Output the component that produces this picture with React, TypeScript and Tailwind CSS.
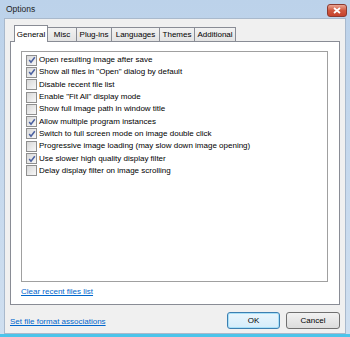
const options: { label: string; checked: boolean }[] = [
  { label: 'Open resulting image after save', checked: true },
  { label: 'Show all files in "Open" dialog by default', checked: true },
  { label: 'Disable recent file list', checked: false },
  { label: 'Enable "Fit All" display mode', checked: false },
  { label: 'Show full image path in window title', checked: false },
  { label: 'Allow multiple program instances', checked: true },
  { label: 'Switch to full screen mode on image double click', checked: true },
  { label: 'Progressive image loading (may slow down image opening)', checked: false },
  { label: 'Use slower high quality display filter', checked: true },
  { label: 'Delay display filter on image scrolling', checked: false },
];

const tabs = [
  { label: 'General', w: 'w-[34px]' },
  { label: 'Misc', w: 'w-[30px]' },
  { label: 'Plug-ins', w: 'w-[36px]' },
  { label: 'Languages', w: 'w-[49px]' },
  { label: 'Themes', w: 'w-[36px]' },
  { label: 'Additional', w: 'w-[42px]' },
];

function CheckBox({ checked }: { checked: boolean }) {
  return (
    <div className="flex h-[11px] w-[11px] shrink-0 items-center justify-center border border-[#8f8f8f] bg-white">
      <div className="flex h-[9px] w-[9px] items-center justify-center bg-gradient-to-br from-[#d8d8d8] to-[#f8f8f8]">
        {checked && (
          <svg width="8" height="8" viewBox="0 0 8 8">
            <path d="M1.2 4 L3 6.3 L6.8 1.2" fill="none" stroke="#4b61a0" strokeWidth="1.5" />
          </svg>
        )}
      </div>
    </div>
  );
}

export default function App() {
  return (
    <div
      className="flex h-[337px] w-[350px] flex-col overflow-hidden bg-gradient-to-b from-[#bcd2ea] to-[#cfdff0] text-[8px] text-black"
      style={{ fontFamily: '"Liberation Sans", Arial, sans-serif' }}
    >
      <div className="flex h-[18px] shrink-0 items-center justify-between pl-[6px] pr-[3px]">
        <span className="text-[8.5px] text-[#1e1e1e]">Options</span>
        <div className="mt-[2px] flex h-[13px] w-[20px] items-center justify-center rounded-[3px] border border-[#8b3a30] bg-gradient-to-b from-[#e8a493] via-[#d0583f] to-[#c6422c]">
          <svg width="8" height="7" viewBox="0 0 8 7">
            <path d="M1 1 L7 6 M7 1 L1 6" stroke="white" strokeWidth="1.8" />
          </svg>
        </div>
      </div>
      <div className="mx-[4px] flex flex-1 flex-col border border-[#a9b9cc] bg-[#f0f0f0] px-[5px]">
        <div className="mt-[6px] flex h-[16px] items-end whitespace-nowrap pl-[4px]">
          {tabs.map((t, i) =>
            i === 0 ? (
              <div
                key={t.label}
                className={`relative z-10 -mb-px flex h-[17px] ${t.w} items-start justify-center border border-b-0 border-[#898c95] bg-white pt-[3px]`}
              >
                {t.label}
              </div>
            ) : (
              <div
                key={t.label}
                className={`flex h-[14px] ${t.w} -ml-px items-center justify-center border border-b-0 border-[#898c95] bg-gradient-to-b from-[#f2f2f2] to-[#e3e3e3]`}
              >
                {t.label}
              </div>
            ),
          )}
        </div>
        <div className="flex h-[264px] flex-col border border-[#898c95] bg-white pl-[10px] pr-[11px] pt-[9px]">
          <div className="flex h-[231px] flex-col border border-[#a0a0a0] pl-[4px] pt-[2px]">
            {options.map((o) => (
              <div key={o.label} className="flex h-[12.3px] items-center gap-[2px] whitespace-nowrap">
                <CheckBox checked={o.checked} />
                <span className="leading-none">{o.label}</span>
              </div>
            ))}
          </div>
          <a className="mt-[4px] text-[#0066cc] underline">Clear recent files list</a>
        </div>
        <div className="mt-[7px] flex items-center justify-between">
          <a className="mt-[2px] text-[#0066cc] underline">Set file format associations</a>
          <div className="flex gap-[6px]">
            <button className="h-[17px] w-[53px] rounded-[3px] border border-[#3c7fb1] bg-gradient-to-b from-[#eaf6fd] to-[#d4ecfa] text-[8px] shadow-[inset_0_0_0_1px_#a8e0f8]">
              OK
            </button>
            <button className="h-[17px] w-[54px] rounded-[3px] border border-[#707070] bg-gradient-to-b from-[#f2f2f2] to-[#dcdcdc] text-[8px]">
              Cancel
            </button>
          </div>
        </div>
      </div>
      <div className="h-[3px] shrink-0 bg-[#4cc4ea]" />
    </div>
  );
}
